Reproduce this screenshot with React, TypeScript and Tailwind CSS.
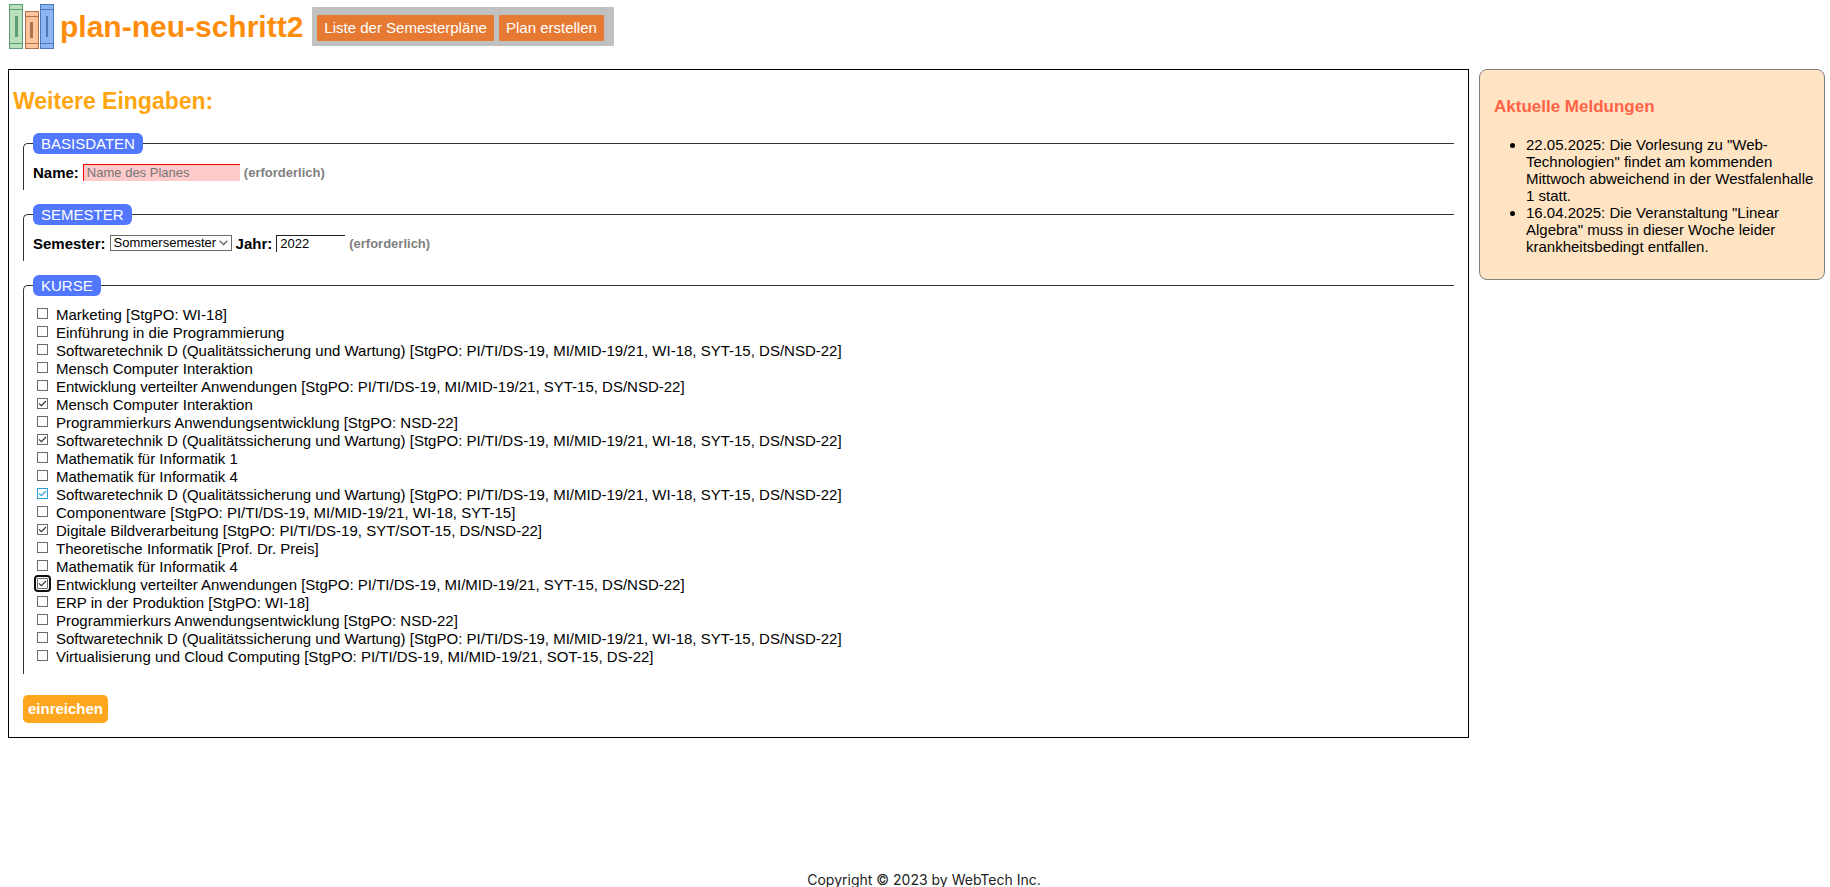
import React, { useState } from "react";

const SOFTWARETECHNIK =
  "Softwaretechnik D (Qualitätssicherung und Wartung) [StgPO: PI/TI/DS-19, MI/MID-19/21, WI-18, SYT-15, DS/NSD-22]";
const VERTEILTE =
  "Entwicklung verteilter Anwendungen [StgPO: PI/TI/DS-19, MI/MID-19/21, SYT-15, DS/NSD-22]";

type Look = "normal" | "hover" | "focus";

interface Course {
  name: string;
  checked?: boolean;
  look?: Look;
}

const COURSES: Course[] = [
  { name: "Marketing [StgPO: WI-18]" },
  { name: "Einführung in die Programmierung" },
  { name: SOFTWARETECHNIK },
  { name: "Mensch Computer Interaktion" },
  { name: VERTEILTE },
  { name: "Mensch Computer Interaktion", checked: true },
  { name: "Programmierkurs Anwendungsentwicklung [StgPO: NSD-22]" },
  { name: SOFTWARETECHNIK, checked: true },
  { name: "Mathematik für Informatik 1" },
  { name: "Mathematik für Informatik 4" },
  { name: SOFTWARETECHNIK, checked: true, look: "hover" },
  { name: "Componentware [StgPO: PI/TI/DS-19, MI/MID-19/21, WI-18, SYT-15]" },
  { name: "Digitale Bildverarbeitung [StgPO: PI/TI/DS-19, SYT/SOT-15, DS/NSD-22]", checked: true },
  { name: "Theoretische Informatik [Prof. Dr. Preis]" },
  { name: "Mathematik für Informatik 4" },
  { name: VERTEILTE, checked: true, look: "focus" },
  { name: "ERP in der Produktion [StgPO: WI-18]" },
  { name: "Programmierkurs Anwendungsentwicklung [StgPO: NSD-22]" },
  { name: SOFTWARETECHNIK },
  { name: "Virtualisierung und Cloud Computing [StgPO: PI/TI/DS-19, MI/MID-19/21, SOT-15, DS-22]" },
];

const BOX_LOOK: Record<Look, string> = {
  normal: "border-[#6b6b6b] text-[#333333]",
  hover: "border-[#2d9fd8] text-[#2d9fd8]",
  focus: "border-[#6b6b6b] text-[#333333] rounded-[1px] outline-2 outline-offset-1 outline-[#101010]",
};

function Logo() {
  return (
    <svg width="45" height="45" viewBox="0 0 45 45" aria-hidden="true" className="shrink-0">
      <g strokeWidth="1">
        <rect x="0.5" y="0.5" width="13" height="44" fill="#b9dfbc" stroke="#5a9c75" />
        <path d="M1 5.5H13M1 39.5H13" stroke="#5a9c75" />
        <rect x="6" y="12" width="3" height="21" fill="#5a9c75" />
        <rect x="16.5" y="7.5" width="13" height="37" fill="#ffc49c" stroke="#ad6f50" />
        <path d="M17 12.5H29M17 39.5H29" stroke="#ad6f50" />
        <rect x="21" y="18" width="3" height="16" fill="#ad6f50" />
        <rect x="31.5" y="0.5" width="13" height="44" fill="#8bb6f0" stroke="#4a78b8" />
        <path d="M32 5.5H44M32 39.5H44" stroke="#4a78b8" />
        <rect x="37" y="12" width="2" height="21" fill="#4a78b8" />
      </g>
    </svg>
  );
}

function Group({ title, children }: { title: string; children: React.ReactNode }) {
  return (
    <fieldset className="mb-[14px] ml-[10px] min-w-0 rounded-tl-[5px] border-t border-l border-[#333333] pl-[9px]">
      <legend className="rounded-[6px] bg-[#5277ff] px-2 leading-[21px] text-white">{title}</legend>
      {children}
    </fieldset>
  );
}

function Required() {
  return <span className="text-[13px] font-bold text-[#808080]">(erforderlich)</span>;
}

function CourseRow({ course, index }: { course: Course; index: number }) {
  const [checked, setChecked] = useState(Boolean(course.checked));
  const id = `kurs-${index}`;
  return (
    <li className="flex h-[18px] items-start leading-[18px]">
      <span
        className={`mt-[2px] mr-2 grid size-[11px] shrink-0 border ${BOX_LOOK[course.look ?? "normal"]}`}
      >
        <input
          id={id}
          type="checkbox"
          checked={checked}
          onChange={(e) => setChecked(e.target.checked)}
          className="col-start-1 row-start-1 m-0 size-[9px] appearance-none outline-none"
        />
        {checked && (
          <svg viewBox="0 0 9 9" className="pointer-events-none col-start-1 row-start-1 size-[9px]" fill="none" stroke="currentColor" strokeWidth="1.2">
            <path d="M1 4.3L3.4 6.7L8 2" />
          </svg>
        )}
      </span>
      <label htmlFor={id}>{course.name}</label>
    </li>
  );
}

export default function App() {
  return (
    <div className="flex min-h-screen flex-col bg-white font-['Liberation_Sans',Arial,sans-serif] text-[15px] leading-[17px] text-black">
      <header className="flex h-[53px] items-center pl-[9px]">
        <Logo />
        <h1 className="mr-[9px] ml-[6px] text-[30px] leading-[34px] font-bold text-[#ff8c0a]">plan-neu-schritt2</h1>
        <nav className="flex items-start gap-[5px] rounded-[1px] bg-[#c0c0c0] pt-2 pr-[10px] pb-[5px] pl-[5px]">
          <a href="#liste" className="rounded-[1px] bg-[#e67a33] px-[7px] leading-[26px] text-white">Liste der Semesterpläne</a>
          <a href="#neu" className="rounded-[1px] bg-[#e67a33] px-[7px] leading-[26px] text-white">Plan erstellen</a>
        </nav>
      </header>

      <div className="mt-4 flex items-start gap-[10px] pr-[5px] pl-2">
        <main className="min-w-0 flex-1 border border-black pt-[17px] pr-[14px] pb-[14px] pl-1">
          <h2 className="mb-[18px] text-[23px] leading-[28px] font-bold text-[#ffa50f]">Weitere Eingaben:</h2>
          <form onSubmit={(e) => e.preventDefault()}>
            <Group title="BASISDATEN">
              <div className="flex h-9 items-center gap-1">
                <label htmlFor="name" className="font-bold">Name:</label>
                <input
                  id="name"
                  type="text"
                  placeholder="Name des Planes"
                  className="h-[17px] w-[157px] border-t border-l border-[#ff0000] bg-[#ffcaca] pl-[3px] text-[13px] placeholder:text-[#757575]"
                />
                <Required />
              </div>
            </Group>
            <Group title="SEMESTER">
              <div className="flex h-9 items-center gap-1">
                <label htmlFor="semester" className="font-bold">Semester:</label>
                <span className="grid items-center">
                  <select
                    id="semester"
                    defaultValue="so"
                    className="col-start-1 row-start-1 h-4 w-[122px] appearance-none border border-[#6b6b6b] bg-white pl-[3px] text-[13px] leading-[14px]"
                  >
                    <option value="so">Sommersemester</option>
                    <option value="wi">Wintersemester</option>
                  </select>
                  <svg viewBox="0 0 9 6" className="pointer-events-none col-start-1 row-start-1 mr-1 h-[6px] w-[9px] justify-self-end" fill="none" stroke="#767676" strokeWidth="1.5">
                    <path d="M0.7 0.8L4.5 4.6L8.3 0.8" />
                  </svg>
                </span>
                <label htmlFor="jahr" className="font-bold">Jahr:</label>
                <input
                  id="jahr"
                  type="text"
                  defaultValue="2022"
                  className="h-[17px] w-[69px] border-t border-l border-[#222222] bg-white pl-[3px] text-[13px]"
                />
                <Required />
              </div>
            </Group>
            <Group title="KURSE">
              <ul className="pt-[10px] pb-2 pl-1">
                {COURSES.map((course, index) => (
                  <CourseRow key={index} course={course} index={index} />
                ))}
              </ul>
            </Group>
            <button type="submit" className="mt-[21px] ml-[10px] block rounded-[5px] bg-[#fea61e] px-[5px] leading-[28px] font-bold text-white">
              einreichen
            </button>
          </form>
        </main>

        <aside className="w-[346px] shrink-0 rounded-[8px] border border-[#808080] bg-[#ffe4c4] px-[14px] pt-[27px] pb-[24px]">
          <h3 className="mb-[19px] text-[17px] leading-5 font-bold text-[#ff6347]">Aktuelle Meldungen</h3>
          <ul className="mr-[-6px] list-disc pl-8">
            <li>22.05.2025: Die Vorlesung zu "Web-Technologien" findet am kommenden Mittwoch abweichend in der Westfalenhalle 1 statt.</li>
            <li>16.04.2025: Die Veranstaltung "Linear Algebra" muss in dieser Woche leider krankheitsbedingt entfallen.</li>
          </ul>
        </aside>
      </div>

      <footer className="mt-auto pl-[18px] text-center font-['Inter',sans-serif] text-[14px] leading-[15px] text-[#222222]">
        Copyright © 2023 by WebTech Inc.
      </footer>
    </div>
  );
}
